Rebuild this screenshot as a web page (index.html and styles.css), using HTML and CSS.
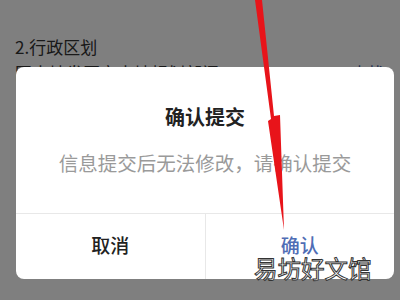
FILE: index.html
```html
<!DOCTYPE html>
<html lang="zh-CN">

<head>
    <meta charset="UTF-8">
    <meta name="viewport" content="width=device-width, initial-scale=1.0">
    <title>确认提交</title>
    <link rel="stylesheet" href="styles.css">
</head>

<body>
    <div class="page">
        <div class="section-title">2.行政区划</div>
        <div class="field-row">
            <span class="field-value">国土地发区市土地规划部门</span>
            <span class="field-link">查找</span>
        </div>
    </div>

    <div class="mask">
        <div class="dialog">
            <div class="dialog-body">
                <h3 class="dialog-title">确认提交</h3>
                <p class="dialog-text">信息提交后无法修改，请确认提交</p>
            </div>
            <div class="dialog-actions">
                <button class="btn btn-cancel">取消</button>
                <button class="btn btn-ok">确认</button>
            </div>
        </div>
    </div>

    <svg class="arrow" width="400" height="300" viewBox="0 0 400 300">
        <polygon points="255,0 262,0 274,116 280,115 284,230 268,121 271,119" fill="#e8141a" />
    </svg>

    <div class="watermark">易坊好文馆</div>
</body>

</html>
```

FILE: styles.css
```css
* {
    box-sizing: border-box;
}

body {
    margin: 0;
    width: 400px;
    height: 300px;
    overflow: hidden;
    font-family: "Noto Sans CJK SC", "Noto Sans", sans-serif;
    background: #ffffff;
    position: relative;
}

.page {
    padding: 34px 15px 0;
    color: #333333;
    font-size: 17px;
}

.section-title {
    line-height: 26px;
}

.field-row {
    display: flex;
    justify-content: space-between;
    line-height: 22px;
    margin-top: 2px;
}

.field-link {
    color: #3c5a9e;
}

.mask {
    position: absolute;
    inset: 0;
    background: rgba(0, 0, 0, 0.5);
    padding: 67px 6px 0 16px;
}

.dialog {
    width: 378px;
    height: 212px;
    background: #ffffff;
    border-radius: 8px;
    display: flex;
    flex-direction: column;
    overflow: hidden;
}

.dialog-body {
    padding: 36px 0 36px;
    text-align: center;
    border-bottom: 1px solid #e8e8e8;
}

.dialog-title {
    margin: 0;
    font-size: 20px;
    line-height: 28px;
    font-weight: bold;
    color: #222222;
}

.dialog-text {
    margin: 18px 0 0;
    font-size: 19.5px;
    line-height: 28px;
    color: #9a9a9a;
}

.dialog-actions {
    flex: 1;
    display: flex;
}

.btn {
    flex: 1;
    border: none;
    background: none;
    font-family: inherit;
    font-size: 19px;
    font-weight: 500;
    padding: 0 0 4px;
    cursor: pointer;
}

.btn-cancel {
    color: #222222;
    border-right: 1px solid #e8e8e8;
}

.btn-ok {
    color: #4f6db5;
}

.arrow {
    position: absolute;
    left: 0;
    top: 0;
}

.watermark {
    position: absolute;
    left: 254px;
    top: 253px;
    font-size: 23.5px;
    line-height: 30px;
    color: #ffffff;
    -webkit-text-stroke: 1px #333333;
}
```
